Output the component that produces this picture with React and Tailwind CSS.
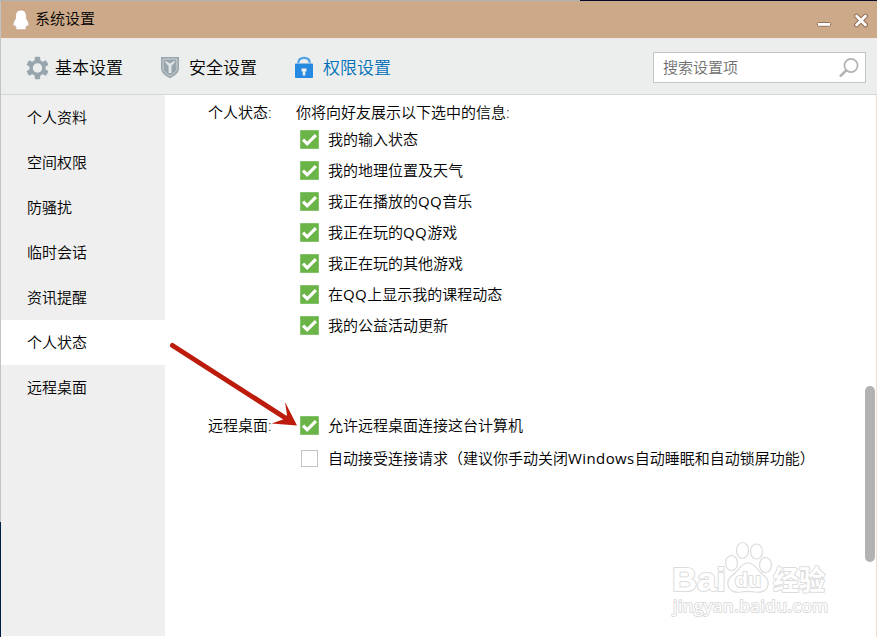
import React, { useState } from 'react';

const tabs = [
  { id: 'basic', label: '基本设置', icon: GearIcon },
  { id: 'security', label: '安全设置', icon: ShieldIcon },
  { id: 'privacy', label: '权限设置', icon: LockIcon },
];

const sections = ['个人资料', '空间权限', '防骚扰', '临时会话', '资讯提醒', '个人状态', '远程桌面'];

const statusOptions = [
  '我的输入状态',
  '我的地理位置及天气',
  '我正在播放的QQ音乐',
  '我正在玩的QQ游戏',
  '我正在玩的其他游戏',
  '在QQ上显示我的课程动态',
  '我的公益活动更新',
];

function PenguinIcon() {
  return (
    <svg width="18" height="22" viewBox="0 0 18 22" className="shrink-0">
      <path
        d="M9 1C5.3 1 3.6 3.8 3.6 7v2.400C2.200 11.600 1 13.800 1 16.200c0 1.600.9 1.300 1.900.2.3 1 .8 1.900 1.500 2.600-1 .5-1 1.700.3 1.700h8.600c1.300 0 1.300-1.200.3-1.700.7-.7 1.200-1.600 1.500-2.600 1 1.100 1.900 1.400 1.900-.2 0-2.400-1.200-4.600-2.600-6.800V7C14.400 3.800 12.700 1 9 1z"
        fill="#fff"
        stroke="#b89678"
        strokeWidth="0.6"
      />
    </svg>
  );
}

function GearIcon() {
  return (
    <svg width="22" height="24" viewBox="0 0 22 24">
      <g fill="#98a5ad">
        <rect x="8.800" y="0.800" width="5.400" height="22.400" rx="0.8" />
        <rect x="8.800" y="0.800" width="5.400" height="22.400" rx="0.8" transform="rotate(60 11.500 12)" />
        <rect x="8.800" y="0.800" width="5.400" height="22.400" rx="0.8" transform="rotate(120 11.500 12)" />
        <circle cx="11.500" cy="12" r="8.200" />
      </g>
      <circle cx="11.500" cy="12" r="4.700" fill="#eceeed" />
    </svg>
  );
}

function ShieldIcon() {
  return (
    <svg width="20" height="24" viewBox="0 0 20 24">
      <path d="M1 1h18v11.200c0 4.300-4.200 7.600-9 10-4.800-2.400-9-5.700-9-10z" fill="#98a5ad" />
      <path d="M3 3h14v9c0 3.300-3.200 5.800-7 7.900-3.800-2.100-7-4.600-7-7.900z" fill="#98a5ad" stroke="#d5dadd" strokeWidth="0.9" />
      <path d="M5.300 4.700l4.700 2.700 4.700-2.700v1.800l-3.300 3.600v7h-2.800v-7L5.300 6.500z" fill="#e1e5e6" />
    </svg>
  );
}

function LockIcon() {
  return (
    <svg width="20" height="24" viewBox="0 0 20 24">
      <path d="M4.300 7C4.300 3.500 6.600 1.800 10 1.800s5.700 1.700 5.700 5" fill="none" stroke="#4ea3e6" strokeWidth="2.300" />
      <rect x="1" y="7.500" width="18" height="14.500" rx="0.8" fill="#268be0" />
      <path d="M7.500 12.500h5v3h-1.200v4H8.700v-4H7.500z" fill="#eceeed" />
    </svg>
  );
}

function SearchIcon() {
  return (
    <svg width="22" height="20" viewBox="0 0 22 20" fill="none" stroke="#b2b2b2">
      <circle cx="13" cy="8.500" r="6.600" strokeWidth="1.700" />
      <path d="M8.300 13.400L2 19.400" strokeWidth="2.600" />
    </svg>
  );
}

function Checkbox({ checked }) {
  if (!checked) {
    return <span className="m-px size-[17px] shrink-0 border border-[#c3c3c3] bg-white" />;
  }
  return (
    <svg width="19" height="19" viewBox="0 0 19 19" className="shrink-0">
      <rect width="19" height="19" rx="0.8" fill="#83c36a" />
      <rect x="1" y="1" width="17" height="17" fill="#6bb448" />
      <path d="M3 9.600l4.200 4.200 8.700-8.700" fill="none" stroke="#fff" strokeWidth="3.200" />
    </svg>
  );
}

// Latin runs are a touch heavier and wider than the Chinese text around them
function Label({ text }) {
  return (
    <span className="whitespace-nowrap pb-0.5">
      {text.split(/([A-Za-z]+)/).map((part, i) =>
        /^[A-Za-z]+$/.test(part) ? <span key={i} className="font-normal tracking-[0.4px]">{part}</span> : part
      )}
    </span>
  );
}

function Option({ text, checked, onToggle, className }) {
  return (
    <button onClick={onToggle} className={`flex items-center gap-[9px] text-left ${className}`}>
      <Checkbox checked={checked} />
      <Label text={text} />
    </button>
  );
}

function Watermark() {
  return (
    <svg width="170" height="84" viewBox="0 0 170 84" className="absolute left-[506px] top-[443px] pointer-events-none">
      <g fill="#fff" stroke="#dcdcdc" strokeWidth="1.200">
        <ellipse cx="60.500" cy="25" rx="6" ry="7.500" />
        <ellipse cx="71.500" cy="12.500" rx="6" ry="8" />
        <ellipse cx="85.500" cy="13.500" rx="6" ry="7.500" />
        <ellipse cx="94.500" cy="27" rx="6" ry="7.500" />
        <path d="M77 25c-7 0-8 6-13 10-5 4-8 7-7 12 1 6 7 8 13 7 5-1 9-1 14 0 6 1 12-1 13-7 1-5-2-8-7-12-5-4-6-10-13-10z" />
        <g strokeLinejoin="round" paintOrder="stroke" strokeWidth="2">
          <text x="1" y="53" fontSize="34" fontWeight="700" textLength="54" lengthAdjust="spacingAndGlyphs" fontFamily="Liberation Sans, sans-serif">Bai</text>
          <text x="64" y="49" fontSize="21" fontWeight="700" textLength="26" lengthAdjust="spacingAndGlyphs" fontFamily="Liberation Sans, sans-serif">du</text>
          <text x="102" y="52" fontSize="27" fontWeight="700" textLength="52" lengthAdjust="spacingAndGlyphs" fontFamily="Noto Sans CJK SC, sans-serif">经验</text>
          <text x="2" y="74" fontSize="17" fontWeight="400" textLength="155" fontFamily="Open Sans, sans-serif">jingyan.baidu.com</text>
        </g>
      </g>
    </svg>
  );
}

export default function App() {
  const [activeTab, setActiveTab] = useState('privacy');
  const [activeSection, setActiveSection] = useState('个人状态');
  const [status, setStatus] = useState(statusOptions.map(() => true));
  const [allowRemote, setAllowRemote] = useState(true);
  const [autoAccept, setAutoAccept] = useState(false);

  const toggleStatus = (index) => {
    setStatus(status.map((value, i) => (i === index ? !value : value)));
  };

  return (
    <div className="flex h-[637px] w-[877px] flex-col overflow-hidden bg-white font-['Open_Sans','Noto_Sans_CJK_SC',sans-serif] text-[15px] leading-5 font-[350] text-black">
      {/* Desktop behind the window */}
      <div className="flex h-px shrink-0">
        <div className="w-[580px] bg-[#b3b3b3]" />
        <div className="grow bg-[#050b26]" />
      </div>

      <div className="flex min-h-0 grow">
        <div className="flex w-px shrink-0 flex-col">
          <div className="h-[521px] bg-[#c4c4c4]" />
          <div className="grow bg-[#001d42]" />
        </div>

        <div className="flex min-w-0 grow flex-col">
          {/* Title bar */}
          <header className="flex h-[37px] shrink-0 items-center bg-[#cca988] pl-[11px] pr-2">
            <PenguinIcon />
            <h1 className="ml-[5px] pb-[3px]">系统设置</h1>
            <div className="ml-auto flex items-center gap-[21px]">
              <svg width="16" height="16" viewBox="0 0 16 16">
                <rect x="1.500" y="10.500" width="13" height="3.800" rx="1" fill="#fff" stroke="#957158" />
              </svg>
              <svg width="16" height="16" viewBox="0 0 16 16" strokeLinecap="round">
                <path d="M3.500 4l9 9M12.500 4l-9 9" stroke="#957158" strokeWidth="4.800" />
                <path d="M3.500 4l9 9M12.500 4l-9 9" stroke="#fff" strokeWidth="2.700" />
              </svg>
            </div>
          </header>

          {/* Tabs and search */}
          <nav className="flex h-[57px] shrink-0 items-center border-t border-b border-t-[#f1e9e1] border-b-[#d4d6d5] bg-[#eceeed] pl-[25px] pr-[11px] pt-px text-[17px]">
            <div className="flex gap-[36px]">
              {tabs.map(({ id, label, icon: Icon }) => (
                <button
                  key={id}
                  onClick={() => setActiveTab(id)}
                  className={`flex items-center whitespace-nowrap ${activeTab === id ? 'text-[#0070b8]' : 'text-black'}`}
                >
                  <span className="flex w-[22px] pt-px"><Icon /></span>
                  <span className="ml-[7px] w-[69px] pt-px text-left">{label}</span>
                </button>
              ))}
            </div>
            <div className="ml-auto flex h-[31px] w-[213px] items-center justify-between border border-[#c3c5c4] bg-white pl-[9px] pr-[5px] text-[15px] text-[#6d6d6d]">
              <span className="pb-px">搜索设置项</span>
              <SearchIcon />
            </div>
          </nav>

          <div className="flex min-h-0 grow">
            {/* Sidebar */}
            <aside className="mb-px flex w-[164px] shrink-0 flex-col bg-[#efefef]">
              {sections.map((name) => (
                <button
                  key={name}
                  onClick={() => setActiveSection(name)}
                  className={`h-[45px] pb-0.5 pl-[26px] text-left ${activeSection === name ? 'bg-white' : ''}`}
                >
                  {name}
                </button>
              ))}
            </aside>

            {/* Settings */}
            <main className="relative min-w-0 grow pl-[43px] pt-[7px]">
              <section className="flex">
                <h2 className="w-[88px] shrink-0">个人状态:</h2>
                <div>
                  <p>你将向好友展示以下选中的信息:</p>
                  <div className="mt-[2px] pl-1">
                    {statusOptions.map((text, i) => (
                      <Option key={text} text={text} checked={status[i]} onToggle={() => toggleStatus(i)} className="h-[31px]" />
                    ))}
                  </div>
                </div>
              </section>

              <section className="mt-[68px] flex">
                <h2 className="w-[92px] shrink-0 pt-[6px]">远程桌面:</h2>
                <div>
                  <Option text="允许远程桌面连接这台计算机" checked={allowRemote} onToggle={() => setAllowRemote(!allowRemote)} className="h-[33px]" />
                  <Option text="自动接受连接请求（建议你手动关闭Windows自动睡眠和自动锁屏功能）" checked={autoAccept} onToggle={() => setAutoAccept(!autoAccept)} className="h-[33px]" />
                </div>
              </section>

              {/* Pointer arrow */}
              <svg width="140" height="100" viewBox="0 0 140 100" className="pointer-events-none absolute left-0 top-[240px]">
                <path d="M7.500 10.500L122 84" stroke="#bd1c0c" strokeWidth="5" strokeLinecap="round" />
                <path d="M120 67L132 90.500 106.500 88.500 118 84.500 122 80z" fill="#bd1c0c" />
              </svg>

              <Watermark />
            </main>

            {/* Scrollbar */}
            <div className="w-[11px] shrink-0 pt-[291px]">
              <div className="h-[176px] w-[10px] rounded-full bg-[#b2b2b2]" />
            </div>
            <div className="w-px shrink-0 bg-[#f0dccb]" />
          </div>
        </div>
      </div>
    </div>
  );
}
